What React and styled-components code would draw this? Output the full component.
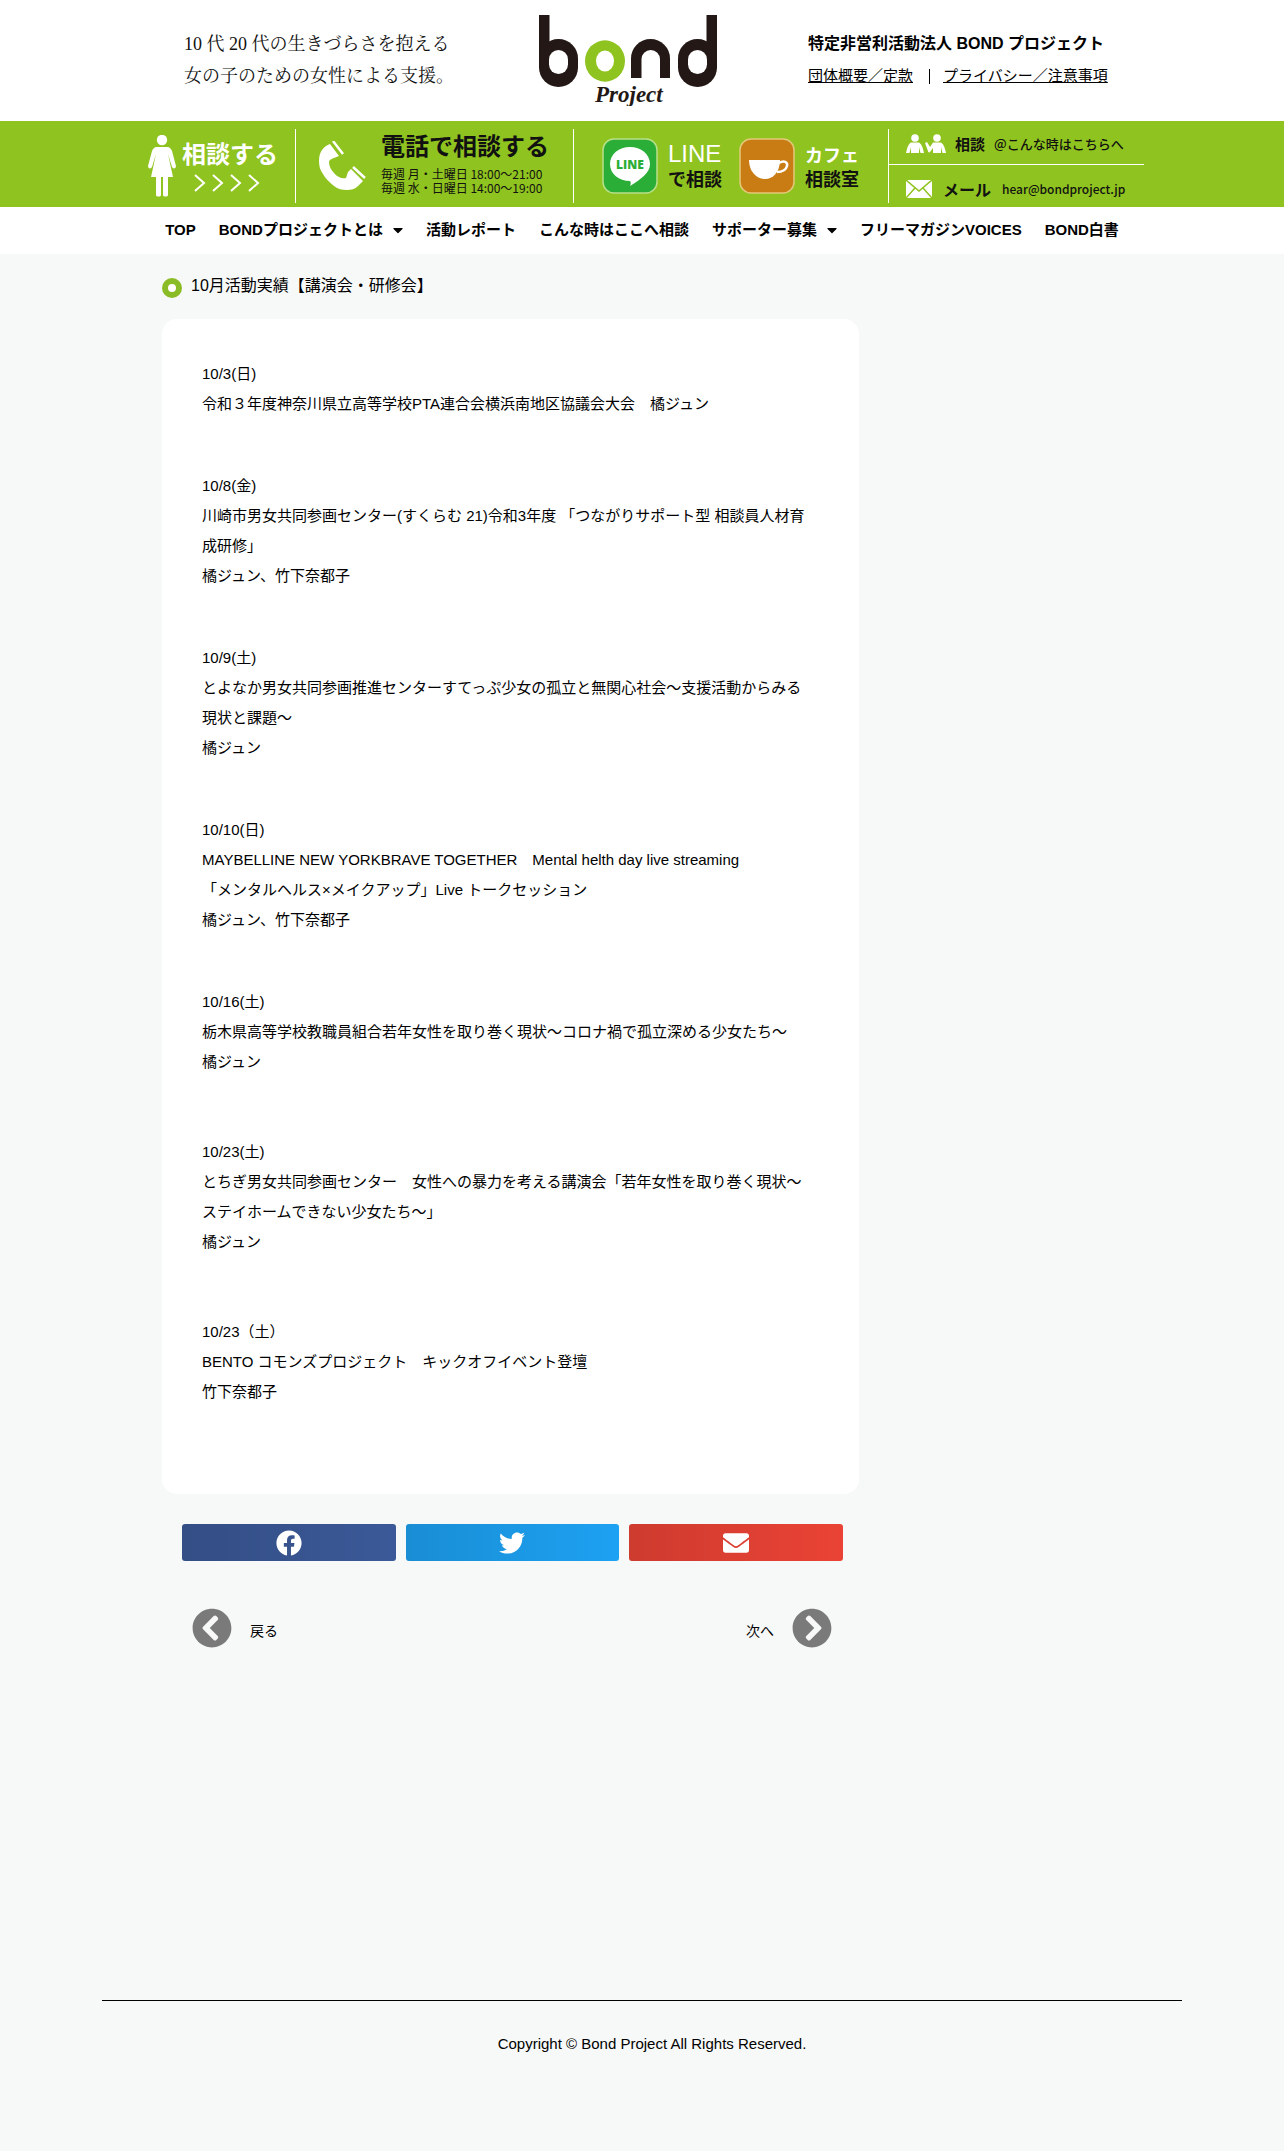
import React from 'react';
import styled, { createGlobalStyle } from 'styled-components';
import {
  FaFacebook,
  FaTwitter,
  FaEnvelope,
  FaCaretDown,
  FaChevronCircleLeft,
  FaChevronCircleRight,
} from 'react-icons/fa';

const GlobalStyle = createGlobalStyle`
  * {
    box-sizing: border-box;
  }

  body {
    margin: 0;
    background: #f7f9f8;
    color: #000;
    font-family: 'Liberation Sans', 'Noto Sans CJK JP', sans-serif;
    font-size: 15px;
  }

  a {
    color: inherit;
    text-decoration: none;
  }

  h1, h2, p, ul {
    margin: 0;
    padding: 0;
  }
`;

const Header = styled.header`
  background: #fff;
`;

const HeaderTop = styled.div`
  display: grid;
  grid-template-columns: 355px 178px 1fr;
  max-width: 916px;
  height: 121px;
  margin: 0 auto;
  padding-top: 15px;
`;

const Catch = styled.p`
  padding-top: 13px;
  color: #111;
  font-family: 'Liberation Serif', 'Noto Serif CJK JP', 'Noto Sans CJK JP', serif;
  font-size: 18px;
  line-height: 32px;
  white-space: nowrap;
`;

const Logo = styled.a`
  display: block;
  height: 91px;
`;

const Organization = styled.div`
  padding: 13px 0 0 91px;
  line-height: 32px;
  white-space: nowrap;
`;

const OrgName = styled.p`
  font-size: 16px;
  font-weight: bold;
`;

const OrgLinks = styled.div`
  display: flex;
  align-items: center;

  a {
    text-decoration: underline;
  }
`;

const LinkDivider = styled.span`
  width: 1px;
  height: 15px;
  margin: 0 13px 0 16px;
  background: #000;
`;

const ConsultBar = styled.div`
  background: #8fc31f;
  font-family: 'Noto Sans CJK JP', sans-serif;
`;

const ConsultInner = styled.div`
  display: grid;
  grid-template-columns: 148px 278px 314px 256px;
  justify-content: center;
  height: 86px;
  padding: 8px 0 7px 8px;
`;

const ConsultCell = styled.a`
  display: flex;
  align-items: center;
  gap: ${(props) => props.$gap || 0}px;
  padding-left: ${(props) => props.$indent || 0}px;
  border-right: 1px solid #fff;
  white-space: nowrap;
`;

const ConsultApps = styled.div`
  display: flex;
  align-items: center;
  gap: 17px;
  padding-left: 28px;
`;

const AppLink = styled.a`
  display: flex;
  align-items: center;
  gap: 10px;
  white-space: nowrap;
`;

const Stack = styled.span`
  display: flex;
  flex-direction: column;
`;

const PhoneStack = styled(Stack)`
  padding-bottom: 8px;

  span:first-child {
    margin-bottom: 6px;
  }
`;

const BarText = styled.span`
  color: ${(props) => (props.$light ? '#fff' : '#111')};
  font-size: ${(props) => props.$size}px;
  font-weight: ${(props) => props.$weight || 700};
  line-height: ${(props) => props.$line || 24}px;
`;

const LineWord = styled(BarText)`
  font-family: 'Liberation Sans', sans-serif;
`;

const Arrows = styled.svg`
  margin: 8px 0 0 12px;
`;

const ContactList = styled.div`
  display: grid;
  grid-template-rows: 36px 1fr;
  border-left: 1px solid #fff;
`;

const ContactLink = styled.a`
  display: flex;
  align-items: center;
  gap: ${(props) => (props.$first ? 9 : 11)}px;
  padding: ${(props) => (props.$first ? '0 0 6px 17px' : '10px 0 0 17px')};
  border-bottom: ${(props) => (props.$first ? '1px solid #fff' : 'none')};
  white-space: nowrap;
`;

const Nav = styled.nav`
  display: flex;
  justify-content: center;
  gap: 23px;
  height: 47px;
  font-weight: bold;
  line-height: 45px;
  white-space: nowrap;
`;

const NavLink = styled.a`
  display: flex;
  align-items: center;
  gap: 10px;
  height: 45px;

  svg {
    width: 10px;
    height: 16px;
  }
`;

const Main = styled.main`
  max-width: 960px;
  margin: 0 auto;
`;

const Column = styled.div`
  max-width: 697px;
`;

const PageTitle = styled.h1`
  display: flex;
  align-items: center;
  gap: 9px;
  height: 65px;
  padding-top: 2px;
  font-size: 16px;
  font-weight: normal;
  line-height: 24px;

  span {
    padding-bottom: 4px;
  }
`;

const Ring = styled.i`
  width: 20px;
  height: 20px;
  border: 6px solid #8abc27;
  border-radius: 50%;
  background: #fff;
`;

const Card = styled.article`
  padding: 40px 40px 87px;
  border-radius: 15px;
  background: #fff;
`;

const Entry = styled.p`
  margin-bottom: ${(props) => props.$space}px;
  line-height: 30px;
`;

const ShareButtons = styled.div`
  display: grid;
  grid-template-columns: repeat(3, 1fr);
  gap: 10px;
  padding: 30px 16px 0 20px;
`;

const ShareButton = styled.button`
  display: flex;
  align-items: center;
  justify-content: center;
  height: 37px;
  padding: 0;
  border: none;
  border-radius: 3px;
  background: linear-gradient(90deg, rgba(0, 0, 0, 0.12), transparent) ${(props) => props.$color};
  color: #fff;
  font-size: 26px;
  cursor: pointer;
`;

const Pager = styled.div`
  display: flex;
  justify-content: space-between;
  padding: 47px 27px 0 30px;
`;

const PagerLink = styled.a`
  display: flex;
  align-items: center;
  gap: 18px;
  font-family: 'Noto Sans CJK JP', sans-serif;
  font-size: 14px;

  svg {
    color: #7a7a7a;
    font-size: 40px;
  }

  span {
    padding-top: 4px;
  }
`;

const Footer = styled.footer`
  max-width: 1080px;
  margin: 352px auto 0;
  padding: 28px 0 92px 20px;
  border-top: 1px solid #000;
  line-height: 30px;
  text-align: center;
`;

const entries = [
  {
    space: 52,
    lines: ['10/3(日)', '令和３年度神奈川県立高等学校PTA連合会横浜南地区協議会大会　橘ジュン'],
  },
  {
    space: 52,
    lines: [
      '10/8(金)',
      '川崎市男女共同参画センター(すくらむ 21)令和3年度 「つながりサポート型 相談員人材育',
      '成研修」',
      '橘ジュン、竹下奈都子',
    ],
  },
  {
    space: 52,
    lines: [
      '10/9(土)',
      'とよなか男女共同参画推進センターすてっぷ少女の孤立と無関心社会〜支援活動からみる',
      '現状と課題〜',
      '橘ジュン',
    ],
  },
  {
    space: 52,
    lines: [
      '10/10(日)',
      'MAYBELLINE NEW YORKBRAVE TOGETHER　Mental helth day live streaming',
      '「メンタルヘルス×メイクアップ」Live トークセッション',
      '橘ジュン、竹下奈都子',
    ],
  },
  {
    space: 60,
    lines: [
      '10/16(土)',
      '栃木県高等学校教職員組合若年女性を取り巻く現状〜コロナ禍で孤立深める少女たち〜',
      '橘ジュン',
    ],
  },
  {
    space: 60,
    lines: [
      '10/23(土)',
      'とちぎ男女共同参画センター　女性への暴力を考える講演会「若年女性を取り巻く現状〜',
      'ステイホームできない少女たち〜」',
      '橘ジュン',
    ],
  },
  {
    space: 0,
    lines: ['10/23（土）', 'BENTO コモンズプロジェクト　キックオフイベント登壇', '竹下奈都子'],
  },
];

const navItems = [
  { label: 'TOP' },
  { label: 'BONDプロジェクトとは', sub: true },
  { label: '活動レポート' },
  { label: 'こんな時はここへ相談' },
  { label: 'サポーター募集', sub: true },
  { label: 'フリーマガジンVOICES' },
  { label: 'BOND白書' },
];

const BondLogo = () => (
  <svg width="178" height="91" viewBox="0 0 178 91">
    <defs>
      <clipPath id="arch">
        <rect x="90" y="20" width="44" height="43" />
      </clipPath>
    </defs>
    <g fill="#231815">
      <rect width="10.5" height="52" />
      <rect x="167.5" width="10.5" height="52" />
      <rect y="24" width="39" height="48" rx="19.5" />
      <rect x="139" y="24" width="39" height="48" rx="19.5" />
      <rect x="92" y="24" width="39" height="70" rx="19.5" clipPath="url(#arch)" />
    </g>
    <g fill="#fff">
      <rect x="10" y="35" width="19" height="24" rx="9.5" />
      <rect x="149" y="35" width="19" height="24" rx="9.5" />
      <rect x="102.5" y="35" width="18.5" height="40" rx="9.2" />
    </g>
    <ellipse cx="66" cy="46" rx="20" ry="20.7" fill="#8fc31f" />
    <ellipse cx="66" cy="46" rx="9" ry="10.5" fill="#fff" />
    <text
      x="56"
      y="87"
      fill="#231815"
      fontFamily="Liberation Serif, serif"
      fontSize="23"
      fontStyle="italic"
      fontWeight="bold"
    >
      Project
    </text>
  </svg>
);

const WomanIcon = () => (
  <svg width="29" height="62" viewBox="0 0 29 62" fill="#fff">
    <circle cx="14" cy="5" r="5.2" />
    <path d="M9 12h10c3 0 4 2 5 4l4 15c0 3-3 3-4 1l-4-13 5 23H3l5-23-4 13c-1 2-4 2-4-1l4-15c1-2 2-4 5-4z" />
    <path d="M8 41h5v19c0 2-5 2-5 0zM15 41h5v19c0 2-5 2-5 0z" />
  </svg>
);

const PhoneIcon = () => (
  <svg width="47" height="51" viewBox="0 0 47 51" fill="#fff">
    <path d="M11 3l9 12-5 2c-3 1-5 2-5 4 0 4 2 8 5 11 3 4 8 6 12 5l2-6 3-3 12 12-5 5c-3 3-7 4-11 4-5 0-9-1-13-4C10 41 6 37 4 33 1 29 0 25 0 20 0 15 1 12 3 9c2-3 5-5 8-6z" />
    <path d="M14 0l10 13M34 26l12 11" stroke="#fff" strokeWidth="2.5" />
  </svg>
);

const LineIcon = () => (
  <svg width="56" height="56" viewBox="0 0 56 56">
    <rect x="1" y="1" width="54" height="54" rx="11" fill="#2bae37" stroke="#b9e08a" strokeWidth="1.5" />
    <path d="M28 9c11 0 20 7 20 17 0 9-9 15-20 22 1-2 1-4 0-5C17 43 8 36 8 26S17 9 28 9z" fill="#fff" />
    <text x="28" y="31" fill="#2bae37" fontFamily="Open Sans, sans-serif" fontSize="12" fontWeight="800" textAnchor="middle">
      LINE
    </text>
  </svg>
);

const CafeIcon = () => (
  <svg width="56" height="56" viewBox="0 0 56 56">
    <rect x="1" y="1" width="54" height="54" rx="11" fill="#c97c14" stroke="#e3c97a" strokeWidth="1.5" />
    <path d="M10 22h31c0 12-7 19-15 19S10 34 10 22z" fill="#fff" />
    <path d="M40 25c5-3 9-1 8 3-1 4-5 6-10 6" fill="none" stroke="#fff" strokeWidth="2.5" />
  </svg>
);

const PeopleIcon = () => (
  <svg width="40" height="20" viewBox="0 0 40 20" fill="#fff">
    <circle cx="9" cy="4" r="3.8" />
    <circle cx="31" cy="4" r="3.8" />
    <path d="M5 8.500h8c3 2 4 6 5 10.500h-3.500l-1.500-6v6H5v-6l-1.500 6H0C1 15 2 10 5 8.500z" />
    <path d="M27 8.500h8c3 2 4 6 5 10.500h-3.500l-1.500-6v6h-8v-5l-3 4c-1 1-2 0-2-1l-3-8 2-1 3 5z" />
  </svg>
);

const MailIcon = () => (
  <svg width="26" height="18" viewBox="0 0 26 18">
    <rect width="26" height="18" fill="#fff" />
    <path d="M0 0l13 11L26 0M0 18l9-10M26 18l-9-10" fill="none" stroke="#8fc31f" strokeWidth="1.5" />
  </svg>
);

const SiteHeader = () => (
  <Header>
    <HeaderTop>
      <Catch>
        10 代 20 代の生きづらさを抱える
        <br />
        女の子のための女性による支援。
      </Catch>
      <Logo href="#" aria-label="bond Project">
        <BondLogo />
      </Logo>
      <Organization>
        <OrgName>特定非営利活動法人 BOND プロジェクト</OrgName>
        <OrgLinks>
          <a href="#">団体概要／定款</a>
          <LinkDivider />
          <a href="#">プライバシー／注意事項</a>
        </OrgLinks>
      </Organization>
    </HeaderTop>

    <ConsultBar>
      <ConsultInner>
        <ConsultCell href="#" $gap={5}>
          <WomanIcon />
          <Stack>
            <BarText $light $size={24}>相談する</BarText>
            <Arrows width="66" height="19" viewBox="0 0 66 19" fill="none" stroke="#fff" strokeWidth="2">
              <path d="M1 2l9 8-9 8M19 2l9 8-9 8M37 2l9 8-9 8M55 2l9 8-9 8" />
            </Arrows>
          </Stack>
        </ConsultCell>
        <ConsultCell href="#" $gap={15} $indent={23}>
          <PhoneIcon />
          <PhoneStack>
            <BarText $size={24} $line={32}>電話で相談する</BarText>
            <BarText $size={12} $weight={400} $line={14}>毎週 月・土曜日 18:00〜21:00</BarText>
            <BarText $size={12} $weight={400} $line={14}>毎週 水・日曜日 14:00〜19:00</BarText>
          </PhoneStack>
        </ConsultCell>
        <ConsultApps>
          <AppLink href="#">
            <LineIcon />
            <Stack>
              <LineWord $light $size={24} $weight={400}>LINE</LineWord>
              <BarText $size={18}>で相談</BarText>
            </Stack>
          </AppLink>
          <AppLink href="#">
            <CafeIcon />
            <Stack>
              <BarText $light $size={18}>カフェ</BarText>
              <BarText $size={18}>相談室</BarText>
            </Stack>
          </AppLink>
        </ConsultApps>
        <ContactList>
          <ContactLink href="#" $first>
            <PeopleIcon />
            <BarText $size={15}>相談</BarText>
            <BarText $size={13} $weight={500}>@こんな時はこちらへ</BarText>
          </ContactLink>
          <ContactLink href="#">
            <MailIcon />
            <BarText $size={16}>メール</BarText>
            <BarText $size={12} $weight={500}>hear@bondproject.jp</BarText>
          </ContactLink>
        </ContactList>
      </ConsultInner>
    </ConsultBar>

    <Nav>
      {navItems.map((item) => (
        <NavLink href="#" key={item.label}>
          {item.label}
          {item.sub && <FaCaretDown />}
        </NavLink>
      ))}
    </Nav>
  </Header>
);

const App = () => {
  return (
    <>
      <GlobalStyle />
      <SiteHeader />
      <Main>
        <Column>
          <PageTitle>
            <Ring />
            <span>10月活動実績【講演会・研修会】</span>
          </PageTitle>
          <Card>
            {entries.map((entry, index) => (
              <Entry key={index} $space={entry.space}>
                {entry.lines.map((line, i) => (
                  <React.Fragment key={line}>
                    {i > 0 && <br />}
                    {line}
                  </React.Fragment>
                ))}
              </Entry>
            ))}
          </Card>
          <ShareButtons>
            <ShareButton type="button" aria-label="Facebook" $color="#3b5998">
              <FaFacebook />
            </ShareButton>
            <ShareButton type="button" aria-label="Twitter" $color="#1da1f2">
              <FaTwitter />
            </ShareButton>
            <ShareButton type="button" aria-label="Email" $color="#ea4335">
              <FaEnvelope />
            </ShareButton>
          </ShareButtons>
          <Pager>
            <PagerLink href="#">
              <FaChevronCircleLeft />
              <span>戻る</span>
            </PagerLink>
            <PagerLink href="#">
              <span>次へ</span>
              <FaChevronCircleRight />
            </PagerLink>
          </Pager>
        </Column>
      </Main>
      <Footer>Copyright © Bond Project All Rights Reserved.</Footer>
    </>
  );
};

export default App;
